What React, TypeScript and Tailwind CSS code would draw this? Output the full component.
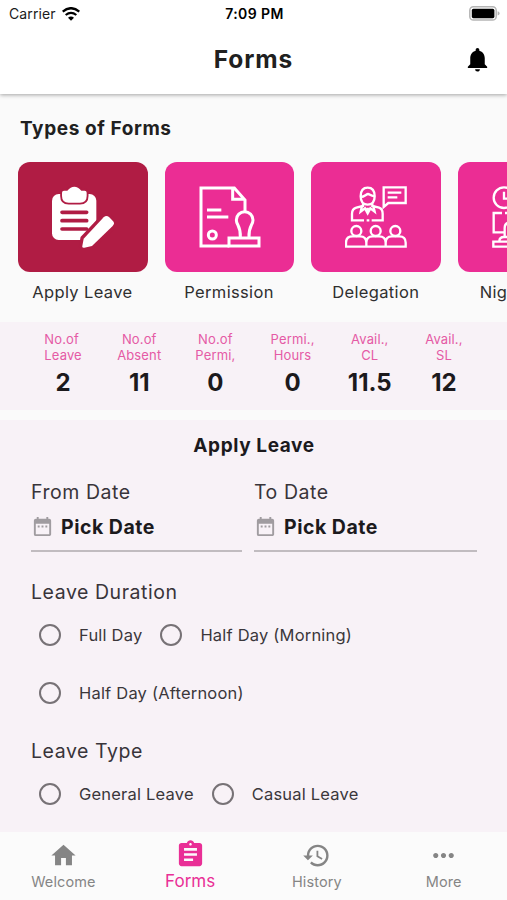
import type { ReactNode } from "react";
import {
  MdAssignment,
  MdDateRange,
  MdHistory,
  MdHome,
  MdMoreHoriz,
  MdNotifications,
} from "react-icons/md";

const ApplyLeaveIcon = () => (
  <svg viewBox="0 0 186 186" className="size-[62px]" fill="#fff">
    <rect x="0" y="24" width="133" height="138" rx="20" />
    <g stroke="#b01c44" strokeLinecap="round" strokeWidth="11">
      <path d="M30 79h74M30 104h74M30 129h74" />
    </g>
    <path
      d="M30 20q0-6 6-6h10Q56 2 67 2t21 12h10q6 0 6 6v10q0 20-20 20H50q-20 0-20-20z"
      stroke="#b01c44"
      strokeWidth="11"
      paintOrder="stroke"
    />
    <path
      d="M91 180l4-22 60-64q8-8 16-1l11 11q8 8 0 16l-62 60-23 5q-7 1-6-5z"
      stroke="#b01c44"
      strokeWidth="20"
      paintOrder="stroke"
    />
  </svg>
);

const PermissionIcon = () => (
  <svg viewBox="0 0 186 186" className="size-[62px]" fill="none" stroke="#fff" strokeWidth="9">
    <path d="M91 180H6V6h100l32 36v38M101 6v34h36" />
    <path d="M24 72h43M24 93h64" />
    <circle cx="40" cy="147" r="12" />
    <path d="M90 180v-24h90v24z" />
    <path d="M124 154c2-34-12-36-12-52a25 25 0 0 1 50 0c0 16-14 18-12 52" />
  </svg>
);

const DelegationIcon = () => (
  <svg viewBox="0 0 186 186" className="size-[62px]" fill="none" stroke="#fff" strokeWidth="7">
    <path d="M47 31q0-26 21-26t21 26q0 25-21 25T47 31z" />
    <path d="M47 33c12 0 17-9 22-9s10 8 20 6" />
    <path d="M54 52v8l-20 5q-13 4-13 18v20h36M82 52v8l20 5q11 4 11 18v20H80M65 103h8" />
    <path d="M51 59l-4 18 13-10 8 15 8-15 13 10-4-18M68 65v14" />
    <path d="M116 4h66v47h-52l-14 12z" />
    <path d="M128 20h41M128 34h29" />
    <circle cx="34" cy="135" r="15" />
    <circle cx="92" cy="135" r="15" />
    <circle cx="151" cy="135" r="15" />
    <path d="M3 182v-12q0-19 20-19h22q19 0 19 19v12zM64 182v-12q0-19 19-19h19q20 0 20 19v12zM122 182v-12q0-19 19-19h22q19 0 19 19v12z" />
  </svg>
);

const NightShiftIcon = () => (
  <svg viewBox="0 0 186 186" className="size-[62px]" fill="none" stroke="#fff" strokeWidth="7">
    <circle cx="36" cy="35" r="31" />
    <path d="M36 17v21h14" />
    <path d="M30 81H5v58h32M39 81h8M56 81h125v58h-60" />
    <path d="M38 152v-26q0-17 18-17h40v43" />
    <path d="M4 182v-15h116v15zM22 166q0-13 14-13h50" />
  </svg>
);

const WifiIcon = () => (
  <svg viewBox="0 0 54 42" className="ml-[6px] h-[14px] w-[18px]" fill="none" stroke="#000">
    <path d="M2 14Q27-7 52 14" strokeWidth="7" />
    <path d="M11 24q16-13 32 0" strokeWidth="6.5" />
    <path d="M27 41l-9-9q9-7 18 0z" fill="#000" stroke="none" />
  </svg>
);

const BatteryIcon = () => (
  <svg viewBox="0 0 31 15" className="h-[15px] w-[31px]">
    <rect x="0.8" y="0.8" width="26.4" height="13.2" rx="3.6" fill="#fff" stroke="#b5b5b5" strokeWidth="1.5" />
    <rect x="2.8" y="2.8" width="22.6" height="9.4" rx="1.6" fill="#000" />
    <path d="M28.6 5.2q2 .6 2 2.2t-2 2.2z" fill="#b5b5b5" />
  </svg>
);

const formTypes = [
  { label: "Apply Leave", icon: <ApplyLeaveIcon />, bg: "bg-[#b01c44]" },
  { label: "Permission", icon: <PermissionIcon />, bg: "bg-[#eb2d94]" },
  { label: "Delegation", icon: <DelegationIcon />, bg: "bg-[#eb2d94]" },
  { label: "Night Shift", icon: <NightShiftIcon />, bg: "bg-[#eb2d94]" },
];

const stats = [
  { top: "No.of", bottom: "Leave", value: "2", className: "text-left" },
  { top: "No.of", bottom: "Absent", value: "11", className: "text-center" },
  { top: "No.of", bottom: "Permi,", value: "0", className: "text-center" },
  { top: "Permi.,", bottom: "Hours", value: "0", className: "pl-[2px] text-center" },
  { top: "Avail.,", bottom: "CL", value: "11.5", className: "pl-[4px] text-center" },
  { top: "Avail.,", bottom: "SL", value: "12", className: "text-center" },
];

const Label = ({ children }: { children: ReactNode }) => (
  <p className="h-7 text-[19.5px] leading-7 tracking-[0.55px] text-[#38343a]">{children}</p>
);

const DateField = ({ label, className }: { label: string; className: string }) => (
  <div className={className}>
    <Label>{label}</Label>
    <div className="flex h-[46px] items-start border-b-2 border-[#c1bcc0] pt-[7px]">
      <MdDateRange className="mt-[2px] size-[23px] text-[#a09ca0]" />
      <span className="ml-[7px] text-[19.5px] leading-7 font-bold tracking-[0.5px] text-[#1c1a1d]">
        Pick Date
      </span>
    </div>
  </div>
);

const RadioOption = ({ label }: { label: string }) => (
  <label className="flex h-7 items-center">
    <span className="size-[22px] rounded-full border-[2.5px] border-[#777276]" />
    <span className="ml-[18px] text-[16.5px] tracking-[0.2px] text-[#3b373b]">{label}</span>
  </label>
);

export default function App() {
  return (
    <div className="flex h-[900px] w-[507px] flex-col overflow-hidden bg-[#fafafa] font-['Inter',sans-serif] whitespace-nowrap">
      <header className="z-10 h-[94px] shrink-0 bg-white shadow-[0_1px_4px_rgba(0,0,0,0.35)]">
        <div className="grid h-[27px] grid-cols-3 items-center pr-[7px] pl-[9px] text-[#1b1b1b]">
          <div className="flex items-center text-[14px] tracking-[0.1px]">
            Carrier
            <WifiIcon />
          </div>
          <span className="text-center text-[14px] font-semibold tracking-[0.4px] text-black">7:09 PM</span>
          <div className="flex justify-end">
            <BatteryIcon />
          </div>
        </div>
        <div className="grid h-[65px] grid-cols-3 items-center pr-[15px] pl-[15px]">
          <h1 className="col-start-2 text-center text-[24.5px] font-bold tracking-[0.9px] text-[#202020]">Forms</h1>
          <MdNotifications className="size-[29px] justify-self-end text-black" />
        </div>
      </header>

      <section className="h-[228px] shrink-0">
        <h2 className="pt-[21px] pl-[20px] text-[19px] leading-7 font-bold tracking-[0.6px] text-[#202020]">
          Types of Forms
        </h2>
        <div className="mt-[19px] flex gap-[17px] pl-[18px]">
          {formTypes.map((form) => (
            <div key={form.label} className="w-[129.7px] shrink-0 text-center">
              <div className={`flex h-[110px] items-center justify-center rounded-[12px] ${form.bg}`}>
                {form.icon}
              </div>
              <p className="mt-[6px] -ml-px text-[16.5px] leading-7 tracking-[0.35px] text-[#2f2f2f]">{form.label}</p>
            </div>
          ))}
        </div>
      </section>

      <section className="grid h-[88px] shrink-0 grid-cols-6 bg-[#f8f2f7] px-[25px] pt-[9px]">
        {stats.map((stat, i) => (
          <div key={i} className={`flex flex-col items-center ${stat.className}`}>
            <p className="text-[13px] leading-4 tracking-[0.15px] text-[#e55aa5]">
              {stat.top}
              <br />
              {stat.bottom}
            </p>
            <p className="mt-[3px] text-[24px] leading-[34px] font-bold text-[#1c1a1d]">{stat.value}</p>
          </div>
        ))}
      </section>

      <main className="mt-[10px] h-[412px] shrink-0 bg-[#f8f2f7] pr-[30px] pl-[31px]">
        <h2 className="pt-[12px] text-center text-[19px] leading-7 font-bold tracking-[0.6px] text-[#1c1a1d]">
          Apply Leave
        </h2>
        <div className="mt-[18px] flex gap-[12px]">
          <DateField label="From Date" className="w-[211px]" />
          <DateField label="To Date" className="flex-1" />
        </div>
        <div className="mt-[26px]">
          <Label>Leave Duration</Label>
          <div className="mt-[15px] flex flex-wrap gap-x-[18px] gap-y-[30px] pl-[8px]">
            <RadioOption label="Full Day" />
            <RadioOption label="Half Day (Morning)" />
            <RadioOption label="Half Day (Afternoon)" />
          </div>
        </div>
        <div className="mt-[30px]">
          <Label>Leave Type</Label>
          <div className="mt-[15px] flex gap-[18px] pl-[8px]">
            <RadioOption label="General Leave" />
            <RadioOption label="Casual Leave" />
          </div>
        </div>
      </main>

      <nav className="grid h-[68px] shrink-0 grid-cols-4 bg-[#fbfbfb] text-[#858585]">
        <a className="flex flex-col items-center pt-[9px] text-[14.5px] leading-5 tracking-[0.1px]">
          <MdHome className="mb-[2px] size-[29px]" />
          Welcome
        </a>
        <a className="flex flex-col items-center pt-[7px] text-[17px] leading-5 text-[#e92f96]">
          <MdAssignment className="mb-px size-[31px]" />
          Forms
        </a>
        <a className="flex flex-col items-center pt-[9px] text-[14.5px] leading-5 tracking-[0.1px]">
          <MdHistory className="mb-[2px] size-[29px]" />
          History
        </a>
        <a className="flex flex-col items-center pt-[8px] text-[14.5px] leading-5 tracking-[0.1px]">
          <MdMoreHoriz className="mb-px size-[31px]" />
          More
        </a>
      </nav>
    </div>
  );
}
